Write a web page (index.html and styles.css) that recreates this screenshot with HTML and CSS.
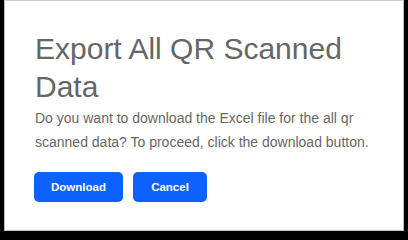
FILE: index.html
```html
<!DOCTYPE html>
<html>
<head>
<meta charset="utf-8">
<link rel="stylesheet" href="styles.css">
</head>
<body>
<div class="modal">
  <h1 class="title">Export All QR Scanned Data</h1>
  <p class="text">Do you want to download the Excel file for the all qr scanned data? To proceed, click the download button.</p>
  <div class="actions">
    <button class="btn btn-download">Download</button>
    <button class="btn btn-cancel">Cancel</button>
  </div>
</div>
</body>
</html>
```
FILE: styles.css
```css
html, body {
  margin: 0;
  padding: 0;
  background: #000;
  width: 408px;
  height: 240px;
  overflow: hidden;
}
.modal {
  box-sizing: border-box;
  margin-left: 4px;
  width: 400px;
  height: 231px;
  background: #fff;
  border: 1px solid #bdbdbd;
  border-top-color: #d0d0d0;
  padding: 29px 30px 0 30px;
  font-family: "Liberation Sans", Arial, sans-serif;
}
.title {
  margin: 0;
  font-size: 30px;
  font-weight: 400;
  line-height: 38px;
  color: #666;
}
.text {
  margin: 0;
  font-size: 14px;
  line-height: 24px;
  color: #666;
}
.actions {
  display: flex;
  gap: 10px;
  margin-top: 18px;
  margin-left: -1px;
}
.btn {
  height: 30px;
  border: none;
  border-radius: 5px;
  background: #0d62ff;
  color: #fff;
  font-family: "Liberation Sans", Arial, sans-serif;
  font-size: 11.5px;
  font-weight: 700;
  padding: 0;
}
.btn-download { width: 89px; }
.btn-cancel { width: 74px; }
```
